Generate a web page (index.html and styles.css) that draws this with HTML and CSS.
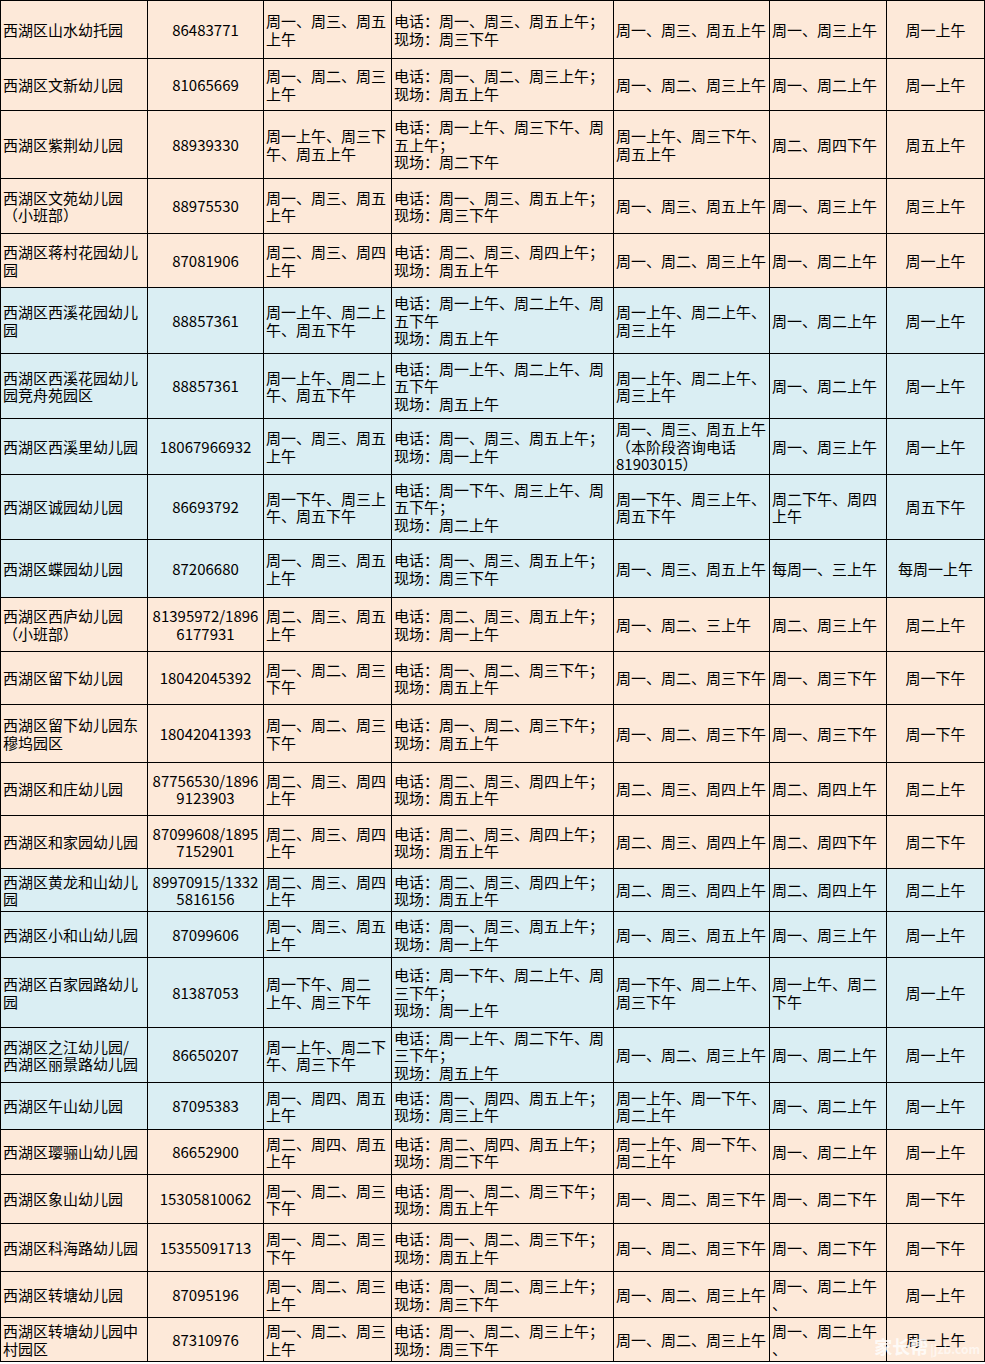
FILE: index.html
```html
<!DOCTYPE html>
<html lang="zh-CN">
<head>
<meta charset="utf-8">
<title>西湖区幼儿园咨询时间</title>
<link rel="stylesheet" href="styles.css">
</head>
<body>
<div class="page">
<table class="sheet">
<colgroup>
<col class="w1"><col class="w2"><col class="w3"><col class="w4"><col class="w5"><col class="w6"><col class="w7">
</colgroup>
<tbody>
<tr class="peach h58"><td>西湖区山水幼托园</td><td>86483771</td><td>周一、周三、周五<br>上午</td><td>电话：周一、周三、周五上午；<br>现场：周三下午</td><td>周一、周三、周五上午</td><td>周一、周三上午</td><td>周一上午</td></tr>
<tr class="peach h52"><td>西湖区文新幼儿园</td><td>81065669</td><td>周一、周二、周三<br>上午</td><td>电话：周一、周二、周三上午；<br>现场：周五上午</td><td>周一、周二、周三上午</td><td>周一、周二上午</td><td>周一上午</td></tr>
<tr class="peach h68"><td>西湖区紫荆幼儿园</td><td>88939330</td><td>周一上午、周三下<br>午、周五上午</td><td>电话：周一上午、周三下午、周<br>五上午；<br>现场：周二下午</td><td>周一上午、周三下午、<br>周五上午</td><td>周二、周四下午</td><td>周五上午</td></tr>
<tr class="peach h55"><td>西湖区文苑幼儿园<br>（小班部）</td><td>88975530</td><td>周一、周三、周五<br>上午</td><td>电话：周一、周三、周五上午；<br>现场：周三下午</td><td>周一、周三、周五上午</td><td>周一、周三上午</td><td>周三上午</td></tr>
<tr class="peach h54"><td>西湖区蒋村花园幼儿<br>园</td><td>87081906</td><td>周二、周三、周四<br>上午</td><td>电话：周二、周三、周四上午；<br>现场：周五上午</td><td>周一、周二、周三上午</td><td>周一、周二上午</td><td>周一上午</td></tr>
<tr class="blue h66"><td>西湖区西溪花园幼儿<br>园</td><td>88857361</td><td>周一上午、周二上<br>午、周五下午</td><td>电话：周一上午、周二上午、周<br>五下午<br>现场：周五上午</td><td>周一上午、周二上午、<br>周三上午</td><td>周一、周二上午</td><td>周一上午</td></tr>
<tr class="blue h65"><td>西湖区西溪花园幼儿<br>园竞舟苑园区</td><td>88857361</td><td>周一上午、周二上<br>午、周五下午</td><td>电话：周一上午、周二上午、周<br>五下午<br>现场：周五上午</td><td>周一上午、周二上午、<br>周三上午</td><td>周一、周二上午</td><td>周一上午</td></tr>
<tr class="blue h56"><td>西湖区西溪里幼儿园</td><td>18067966932</td><td>周一、周三、周五<br>上午</td><td>电话：周一、周三、周五上午；<br>现场：周一上午</td><td>周一、周三、周五上午<br>（本阶段咨询电话<br>81903015）</td><td>周一、周三上午</td><td>周一上午</td></tr>
<tr class="blue h65"><td>西湖区诚园幼儿园</td><td>86693792</td><td>周一下午、周三上<br>午、周五下午</td><td>电话：周一下午、周三上午、周<br>五下午；<br>现场：周二上午</td><td>周一下午、周三上午、<br>周五下午</td><td>周二下午、周四<br>上午</td><td>周五下午</td></tr>
<tr class="blue h58"><td>西湖区蝶园幼儿园</td><td>87206680</td><td>周一、周三、周五<br>上午</td><td>电话：周一、周三、周五上午；<br>现场：周三下午</td><td>周一、周三、周五上午</td><td>每周一、三上午</td><td>每周一上午</td></tr>
<tr class="peach h54"><td>西湖区西庐幼儿园<br>（小班部）</td><td>81395972/1896<br>6177931</td><td>周二、周三、周五<br>上午</td><td>电话：周二、周三、周五上午；<br>现场：周一上午</td><td>周一、周二、三上午</td><td>周二、周三上午</td><td>周二上午</td></tr>
<tr class="peach h53"><td>西湖区留下幼儿园</td><td>18042045392</td><td>周一、周二、周三<br>下午</td><td>电话：周一、周二、周三下午；<br>现场：周五上午</td><td>周一、周二、周三下午</td><td>周一、周三下午</td><td>周一下午</td></tr>
<tr class="peach h58"><td>西湖区留下幼儿园东<br>穆坞园区</td><td>18042041393</td><td>周一、周二、周三<br>下午</td><td>电话：周一、周二、周三下午；<br>现场：周五上午</td><td>周一、周二、周三下午</td><td>周一、周三下午</td><td>周一下午</td></tr>
<tr class="peach h53"><td>西湖区和庄幼儿园</td><td>87756530/1896<br>9123903</td><td>周二、周三、周四<br>上午</td><td>电话：周二、周三、周四上午；<br>现场：周五上午</td><td>周二、周三、周四上午</td><td>周二、周四上午</td><td>周二上午</td></tr>
<tr class="peach h53"><td>西湖区和家园幼儿园</td><td>87099608/1895<br>7152901</td><td>周二、周三、周四<br>上午</td><td>电话：周二、周三、周四上午；<br>现场：周五上午</td><td>周二、周三、周四上午</td><td>周二、周四下午</td><td>周二下午</td></tr>
<tr class="blue h43"><td>西湖区黄龙和山幼儿<br>园</td><td>89970915/1332<br>5816156</td><td>周二、周三、周四<br>上午</td><td>电话：周二、周三、周四上午；<br>现场：周五上午</td><td>周二、周三、周四上午</td><td>周二、周四上午</td><td>周二上午</td></tr>
<tr class="blue h46"><td>西湖区小和山幼儿园</td><td>87099606</td><td>周一、周三、周五<br>上午</td><td>电话：周一、周三、周五上午；<br>现场：周一上午</td><td>周一、周三、周五上午</td><td>周一、周三上午</td><td>周一上午</td></tr>
<tr class="blue h70"><td>西湖区百家园路幼儿<br>园</td><td>81387053</td><td>周一下午、周二<br>上午、周三下午</td><td>电话：周一下午、周二上午、周<br>三下午；<br>现场：周一上午</td><td>周一下午、周二上午、<br>周三下午</td><td>周一上午、周二<br>下午</td><td>周一上午</td></tr>
<tr class="blue h55"><td>西湖区之江幼儿园/<br>西湖区丽景路幼儿园</td><td>86650207</td><td>周一上午、周二下<br>午、周三下午</td><td>电话：周一上午、周二下午、周<br>三下午；<br>现场：周五上午</td><td>周一、周二、周三上午</td><td>周一、周二上午</td><td>周一上午</td></tr>
<tr class="blue h47"><td>西湖区午山幼儿园</td><td>87095383</td><td>周一、周四、周五<br>上午</td><td>电话：周一、周四、周五上午；<br>现场：周三上午</td><td>周一上午、周一下午、<br>周二上午</td><td>周一、周二上午</td><td>周一上午</td></tr>
<tr class="peach h45"><td>西湖区璎骊山幼儿园</td><td>86652900</td><td>周二、周四、周五<br>上午</td><td>电话：周二、周四、周五上午；<br>现场：周二下午</td><td>周一上午、周一下午、<br>周二上午</td><td>周一、周二上午</td><td>周一上午</td></tr>
<tr class="peach h49"><td>西湖区象山幼儿园</td><td>15305810062</td><td>周一、周二、周三<br>下午</td><td>电话：周一、周二、周三下午；<br>现场：周五上午</td><td>周一、周二、周三下午</td><td>周一、周二下午</td><td>周一下午</td></tr>
<tr class="peach h48"><td>西湖区科海路幼儿园</td><td>15355091713</td><td>周一、周二、周三<br>下午</td><td>电话：周一、周二、周三下午；<br>现场：周五上午</td><td>周一、周二、周三下午</td><td>周一、周二下午</td><td>周一下午</td></tr>
<tr class="peach h46"><td>西湖区转塘幼儿园</td><td>87095196</td><td>周一、周二、周三<br>上午</td><td>电话：周一、周二、周三上午；<br>现场：周三下午</td><td>周一、周二、周三上午</td><td>周一、周二上午<br>、</td><td>周一上午</td></tr>
<tr class="peach h44"><td>西湖区转塘幼儿园中<br>村园区</td><td>87310976</td><td>周一、周二、周三<br>上午</td><td>电话：周一、周二、周三上午；<br>现场：周三下午</td><td>周一、周二、周三上午</td><td>周一、周二上午<br>、</td><td>周一上午</td></tr>
</tbody>
</table>
<div class="mark"><span class="mark-cn">家长帮</span><span class="mark-en">|jzb.com</span></div>
</div>
</body>
</html>
```

FILE: styles.css
```css
html, body {
  margin: 0;
  padding: 0;
  background: #ffffff;
}

.page {
  position: relative;
  width: 985px;
}

.sheet {
  border-collapse: collapse;
  table-layout: fixed;
  width: 984px;
  font-family: "Noto Sans CJK SC", "Noto Sans", sans-serif;
  font-size: 15px;
  line-height: 17.5px;
  color: #000000;
}

.w1 { width: 147px; }
.w2 { width: 116px; }
.w3 { width: 128px; }
.w4 { width: 222px; }
.w5 { width: 156px; }
.w6 { width: 117px; }
.w7 { width: 98px; }

.sheet td {
  border: 1px solid #000000;
  padding: 0 2px 0 2px;
  vertical-align: middle;
  text-align: left;
  white-space: nowrap;
  overflow: hidden;
}

.sheet td:nth-child(2),
.sheet td:nth-child(7) {
  text-align: center;
}

.peach td { background: #fde9d9; }
.blue td { background: #daeef3; }

.h43 { height: 43px; }
.h44 { height: 44px; }
.h45 { height: 45px; }
.h46 { height: 46px; }
.h47 { height: 47px; }
.h48 { height: 48px; }
.h49 { height: 49px; }
.h52 { height: 52px; }
.h53 { height: 53px; }
.h54 { height: 54px; }
.h55 { height: 55px; }
.h56 { height: 56px; }
.h58 { height: 58px; }
.h65 { height: 65px; }
.h66 { height: 66px; }
.h68 { height: 68px; }
.h70 { height: 70px; }

.mark {
  position: absolute;
  right: 5px;
  bottom: 6px;
  display: flex;
  align-items: baseline;
  gap: 2px;
  color: rgba(255, 255, 255, 0.8);
  font-family: "Noto Sans CJK SC", sans-serif;
}

.mark-cn {
  font-size: 18px;
  font-weight: 700;
  line-height: 20px;
}

.mark-en {
  font-size: 12px;
  font-weight: 700;
  line-height: 14px;
  color: rgba(255, 255, 255, 0.6);
}
```
